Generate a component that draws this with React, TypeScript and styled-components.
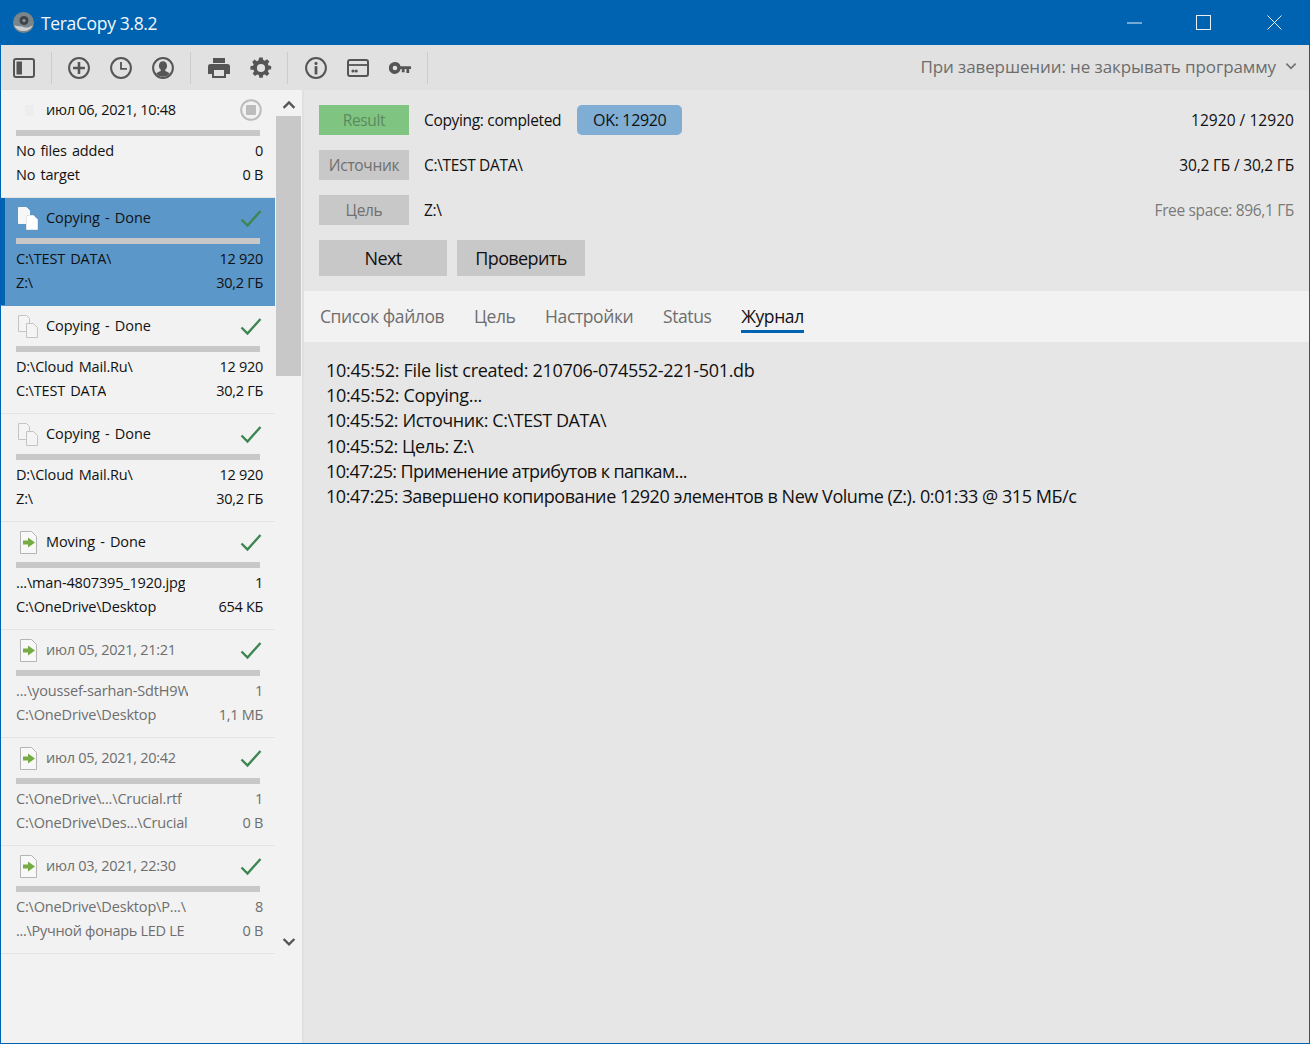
import React from 'react'
import styled, { createGlobalStyle } from 'styled-components'

const GlobalStyle = createGlobalStyle`
  html, body { margin: 0; padding: 0; background: #e6e6e6; }
  body { font-family: "Open Sans", "Noto Sans", "Liberation Sans", sans-serif; color: #111; }
  * { box-sizing: border-box; }
`

const Window = styled.div`
  width: 1310px;
  height: 1044px;
  display: flex;
  flex-direction: column;
  border: 1px solid #0063b1;
  border-top: 0;
  overflow: hidden;
`
const TitleBar = styled.header`
  height: 45px;
  flex: none;
  margin: 0 -1px;
  background: #0063b1;
  color: #f2f7fb;
  display: flex;
  align-items: center;
  padding-left: 13px;
`
const AppName = styled.span`
  font-size: 17.5px;
  letter-spacing: -0.35px;
  margin-left: 7px;
`
const WinButtons = styled.div`
  margin-left: auto;
  display: flex;
`
const WinButton = styled.div`
  width: 71px;
  height: 45px;
  display: flex;
  align-items: center;
  justify-content: center;
`
const MinimizeGlyph = styled.svg`
  margin-left: 4px;
`
const Toolbar = styled.div`
  height: 45px;
  flex: none;
  background: #e1e1e1;
  display: flex;
  align-items: center;
  padding-left: 12px;
`
const ToolIcon = styled.div<{ $w?: number }>`
  width: ${(p) => p.$w ?? 42}px;
  height: 45px;
  display: flex;
  align-items: center;
  justify-content: center;
  color: #555;
`
const ToolGroup = styled.div<{ $w: number }>`
  width: ${(p) => p.$w}px;
  height: 32px;
  display: flex;
  align-items: center;
  border-right: 1px solid #cdcdcd;
`
const OnFinish = styled.div`
  margin-left: auto;
  display: flex;
  align-items: center;
  font-size: 17px;
  letter-spacing: -0.1px;
  line-height: 22px;
  color: #6d6d6d;
  padding-right: 12px;
  padding-bottom: 2px;
  gap: 9px;
`
const Body = styled.div`
  flex: 1;
  display: flex;
  min-height: 0;
`
const Sidebar = styled.aside`
  width: 303px;
  flex: none;
  background: #f2f2f2;
  display: flex;
  border-right: 2px solid #e0e0e0;
`
const List = styled.div`
  width: 274px;
  flex: none;
`
const Row = styled.div<{ $selected?: boolean }>`
  height: 108px;
  padding: 0 12px 0 16px;
  margin-left: -1px;
  width: 275px;
  border-bottom: 1px solid ${(p) => (p.$selected ? '#5c97c9' : '#e4e4e4')};
  background: ${(p) => (p.$selected ? '#5c97c9' : 'transparent')};
  box-shadow: ${(p) => (p.$selected ? 'inset 5px 0 0 #0063b1' : 'none')};
`
const RowHead = styled.div`
  height: 40px;
  display: flex;
  align-items: center;
`
const RowIcon = styled.div<{ $inset?: number }>`
  width: 30px;
  height: 26px;
  flex: none;
  display: flex;
  align-items: center;
  padding-left: ${(p) => p.$inset ?? 2}px;
`
const RowTitle = styled.span<{ $dim?: boolean; $date?: boolean }>`
  font-size: 14.5px;
  margin-top: -2px;
  letter-spacing: ${(p) => (p.$date ? '-0.28px' : '-0.08px')};
  word-spacing: ${(p) => (p.$date ? '0' : '1.5px')};
  color: ${(p) => (p.$dim ? '#6e6e6e' : '#111')};
`
const RowStatus = styled.div`
  margin-left: auto;
  width: 22px;
  display: flex;
  justify-content: center;
  margin-right: 1px;
`
const Progress = styled.div`
  width: 244px;
  height: 6px;
  background: #c8c8c8;
`
const Line = styled.div<{ $dim?: boolean }>`
  height: 24px;
  display: flex;
  align-items: center;
  justify-content: space-between;
  font-size: 14.5px;
  letter-spacing: -0.17px;
  word-spacing: 1.5px;
  color: ${(p) => (p.$dim ? '#6e6e6e' : '#111')};
`
const Lines = styled.div`
  padding-top: 2px;
`
const PathText = styled.span<{ $tight?: boolean }>`
  max-width: 172px;
  overflow: hidden;
  white-space: nowrap;
  letter-spacing: ${(p) => (p.$tight ? '-0.3px' : 'inherit')};
  word-spacing: ${(p) => (p.$tight ? '0' : 'inherit')};
`
const Amount = styled.span`
  letter-spacing: -0.3px;
  word-spacing: 0;
`
const Scrollbar = styled.div`
  width: 26px;
  flex: none;
  display: flex;
  flex-direction: column;
  align-items: stretch;
  padding-right: 1px;
  margin-left: 1px;
`
const ScrollArrow = styled.div`
  height: 26px;
  flex: none;
  display: flex;
  align-items: center;
  justify-content: center;
  padding-top: 3px;
`
const ScrollThumb = styled.div`
  height: 260px;
  background: #c8c8c8;
`
const ScrollGap = styled.div`
  height: 551px;
  flex: none;
`
const Main = styled.main`
  flex: 1;
  min-width: 0;
  display: flex;
  flex-direction: column;
  background: #e6e6e6;
`
const Summary = styled.section`
  padding: 15px;
  display: flex;
  flex-direction: column;
  gap: 15px;
`
const InfoRow = styled.div`
  height: 30px;
  display: flex;
  align-items: center;
  font-size: 15.5px;
  letter-spacing: -0.33px;
`
const Tag = styled.div<{ $green?: boolean }>`
  width: 90px;
  height: 30px;
  margin-right: 15px;
  flex: none;
  display: flex;
  align-items: center;
  justify-content: center;
  background: ${(p) => (p.$green ? '#7fc481' : '#c8c8c8')};
  color: ${(p) => (p.$green ? '#5c8a5f' : '#707070')};
  font-size: 15.5px;
`
const Pill = styled.div`
  width: 105px;
  height: 30px;
  margin-left: 16px;
  border-radius: 5px;
  background: #7fadd4;
  display: flex;
  align-items: center;
  justify-content: center;
  font-size: 16px;
`
const Right = styled.span<{ $dim?: boolean; $spacing: number }>`
  margin-left: auto;
  color: ${(p) => (p.$dim ? '#7a7a7a' : '#111')};
  letter-spacing: ${(p) => p.$spacing}px;
`
const Actions = styled.div`
  display: flex;
  gap: 10px;
`
const ActionButton = styled.div`
  width: 128px;
  height: 36px;
  background: #c8c8c8;
  display: flex;
  align-items: center;
  justify-content: center;
  font-size: 18px;
  letter-spacing: -0.6px;
`
const Tabs = styled.nav`
  height: 51px;
  flex: none;
  background: #f2f2f2;
  display: flex;
  gap: 29.7px;
  padding-left: 16px;
`
const Tab = styled.div<{ $active?: boolean }>`
  height: 38px;
  margin-top: 4px;
  display: flex;
  align-items: center;
  font-size: 17.5px;
  letter-spacing: -0.4px;
  color: ${(p) => (p.$active ? '#111' : '#6e6e6e')};
  border-bottom: 3px solid ${(p) => (p.$active ? '#0063b1' : 'transparent')};
  padding-top: 7px;
`
const Log = styled.div`
  padding: 16px 0 0 22px;
  font-size: 18px;
  line-height: 25.2px;
  color: #111;
`
const LogLine = styled.div<{ $spacing: number }>`
  letter-spacing: ${(p) => p.$spacing}px;
`
const GhostIcon = styled.div`
  width: 9px;
  height: 11px;
  margin-left: 7px;
  background: #ededed;
`

const PageIcon = ({ strong }: { strong?: boolean }) => (
  <svg width="20" height="23" viewBox="0 0 20 23" fill="none">
    <path d="M.5.5h8l3 3v13h-11z" fill={strong ? '#f7f7f7' : '#f4f4f4'} stroke={strong ? '#f7f7f7' : '#c4c4c4'} />
    <path d="M8.500 8.500h7l4 4v10h-11z" fill={strong ? '#fff' : '#f4f4f4'} stroke={strong ? '#e6e6e6' : '#c4c4c4'} />
  </svg>
)
const MoveIcon = () => (
  <svg width="17" height="23" viewBox="0 0 17 23" fill="none">
    <path d="M.5.500h11l5 5v17h-16z" fill="#f8f8f8" stroke="#b5b5b5" />
    <path d="M3 9.500h5V6.500l7 5-7 5v-3H3z" fill="#74ab45" />
  </svg>
)
const Check = () => (
  <svg width="22" height="19" viewBox="0 0 22 19" fill="none">
    <path d="M1.500 10.500l6 6L20.500 2" stroke="#3f8552" strokeWidth="2.4" />
  </svg>
)
const StopIcon = () => (
  <svg width="22" height="22" viewBox="0 0 22 22">
    <circle cx="11" cy="11" r="9.800" fill="none" stroke="#bcbcbc" strokeWidth="2" />
    <rect x="6" y="6" width="10" height="10" rx="1" fill="#bcbcbc" />
  </svg>
)
const Chevron = ({ up, size = 14, thin }: { up?: boolean; size?: number; thin?: boolean }) => (
  <svg width={size} height={size * 0.7} viewBox="0 0 14 10" fill="none">
    <path
      d={up ? 'M1.500 8L7 2.500 12.500 8' : 'M1.500 2L7 7.500 12.500 2'}
      stroke={thin ? '#707070' : '#555'}
      strokeWidth={thin ? 2 : 2.4}
    />
  </svg>
)
const Logo = () => (
  <svg width="21" height="21" viewBox="0 0 21 21">
    <circle cx="10.500" cy="10.500" r="10.500" fill="#7b8589" />
    <path d="M1 13c3 2 6 .5 9.500 2s6.500 0 9.500-2a10.500 10.500 0 0 1-19 0z" fill="#c9cfd2" />
    <circle cx="11" cy="8.500" r="4.500" fill="#3e4447" />
    <circle cx="11" cy="8.500" r="1.600" fill="#8f979b" />
  </svg>
)

const SidebarToggleIcon = () => (
  <svg width="22" height="20" viewBox="0 0 22 20" fill="none">
    <rect x="1" y="1" width="20" height="18" rx="2" stroke="currentColor" strokeWidth="2" />
    <rect x="3.500" y="3.500" width="5.500" height="13" fill="currentColor" />
  </svg>
)
const PlusCircleIcon = () => (
  <svg width="22" height="22" viewBox="0 0 24 24" fill="none">
    <circle cx="12" cy="12" r="10.800" stroke="currentColor" strokeWidth="2.200" />
    <path d="M12 5.500v13M5.500 12h13" stroke="currentColor" strokeWidth="2.800" />
  </svg>
)
const ClockIcon = () => (
  <svg width="22" height="22" viewBox="0 0 24 24" fill="none">
    <circle cx="12" cy="12" r="10.800" stroke="currentColor" strokeWidth="2.200" />
    <path d="M12 5.500V13h6.500" stroke="currentColor" strokeWidth="2" />
  </svg>
)
const UserIcon = () => (
  <svg width="22" height="22" viewBox="0 0 24 24" fill="none">
    <circle cx="12" cy="12" r="10.800" stroke="currentColor" strokeWidth="2.200" />
    <path d="M12 4.500c-2.800 0-4.400 2.200-4.400 5 0 2 .9 3.600 2 4.400v1.400c-2 .7-4 1.600-5 3A10 10 0 0 0 19.400 18.300c-1-1.400-3-2.300-5-3v-1.400c1.100-.8 2-2.400 2-4.400 0-2.800-1.600-5-4.400-5z" fill="currentColor" />
  </svg>
)
const PrinterIcon = () => (
  <svg width="22" height="20" viewBox="0 0 22 20">
    <path fill="currentColor" d="M5 0h12v5H5zM2.500 6h17A2.500 2.500 0 0 1 22 8.500V16h-4v4H4v-4H0V8.500A2.500 2.500 0 0 1 2.500 6z" />
    <rect x="6" y="12" width="10" height="6" fill="#e1e1e1" />
  </svg>
)
const GearIcon = () => (
  <svg width="22" height="22" viewBox="-1 -1 26 26">
    <path fill="currentColor" d="M10 -.5h4l.6 3.100 1.900.8 2.600-1.800 2.800 2.800-1.800 2.600.8 1.900 3.100.6v4l-3.100.6-.8 1.900 1.800 2.600-2.800 2.800-2.600-1.800-1.900.8-.6 3.100h-4l-.6-3.100-1.900-.8-2.600 1.800-2.800-2.800 1.800-2.600-.8-1.900L-.5 14v-4l3.100-.6.8-1.900-1.800-2.600 2.800-2.800 2.600 1.800 1.900-.8z" />
    <circle cx="12" cy="12" r="4.800" fill="#e1e1e1" />
  </svg>
)
const InfoIcon = () => (
  <svg width="22" height="22" viewBox="0 0 24 24" fill="none">
    <circle cx="12" cy="12" r="10.800" stroke="currentColor" strokeWidth="2.200" />
    <circle cx="12" cy="7" r="1.700" fill="currentColor" />
    <rect x="10.500" y="10" width="3" height="9" fill="currentColor" />
  </svg>
)
const CardIcon = () => (
  <svg width="22" height="18" viewBox="0 0 22 18" fill="none">
    <rect x="1" y="1" width="20" height="16" rx="2" stroke="currentColor" strokeWidth="2" />
    <path d="M1.500 6h19" stroke="currentColor" strokeWidth="1.800" />
    <circle cx="6" cy="12" r="1.600" fill="currentColor" />
    <circle cx="9.200" cy="12" r="1.600" fill="currentColor" />
  </svg>
)
const KeyIcon = () => (
  <svg width="22" height="12" viewBox="0 0 24 13">
    <path fill="currentColor" fillRule="evenodd" d="M6.500 0a6.500 6.500 0 0 1 6.100 4.500H24v3.200h-2V12h-3V7.700h-2V11h-3V7.700h-1.300A6.500 6.500 0 1 1 6.500 0zm0 4a2.500 2.500 0 1 0 0 5 2.500 2.500 0 0 0 0-5z" />
  </svg>
)

type Job = {
  kind: 'copyStrong' | 'copy' | 'move'
  title: string
  dim?: boolean
  tightTarget?: boolean
  a: string
  b: string
  n: string
  size: string
}

const jobs: Job[] = [
  { kind: 'copyStrong', title: 'Copying - Done', a: 'C:\\TEST DATA\\', b: 'Z:\\', n: '12 920', size: '30,2 ГБ' },
  { kind: 'copy', title: 'Copying - Done', a: 'D:\\Cloud Mail.Ru\\', b: 'C:\\TEST DATA', n: '12 920', size: '30,2 ГБ' },
  { kind: 'copy', title: 'Copying - Done', a: 'D:\\Cloud Mail.Ru\\', b: 'Z:\\', n: '12 920', size: '30,2 ГБ' },
  { kind: 'move', title: 'Moving - Done', a: '...\\man-4807395_1920.jpg', b: 'C:\\OneDrive\\Desktop', n: '1', size: '654 КБ' },
  { kind: 'move', title: 'июл 05, 2021, 21:21', dim: true, a: '...\\youssef-sarhan-SdtH9W', b: 'C:\\OneDrive\\Desktop', n: '1', size: '1,1 МБ' },
  { kind: 'move', title: 'июл 05, 2021, 20:42', dim: true, a: 'C:\\OneDrive\\...\\Crucial.rtf', b: 'C:\\OneDrive\\Des...\\Crucial', n: '1', size: '0 В' },
  { kind: 'move', title: 'июл 03, 2021, 22:30', dim: true, tightTarget: true, a: 'C:\\OneDrive\\Desktop\\P...\\', b: '...\\Ручной фонарь LED LE', n: '8', size: '0 В' },
]

const logLines = [
  { text: '10:45:52: File list created: 210706-074552-221-501.db', spacing: -0.31 },
  { text: '10:45:52: Copying...', spacing: -0.32 },
  { text: '10:45:52: Источник: C:\\TEST DATA\\', spacing: -0.42 },
  { text: '10:45:52: Цель: Z:\\', spacing: -0.45 },
  { text: '10:47:25: Применение атрибутов к папкам...', spacing: -0.61 },
  { text: '10:47:25: Завершено копирование 12920 элементов в New Volume (Z:). 0:01:33 @ 315 МБ/с', spacing: -0.44 },
]

const tabs = ['Список файлов', 'Цель', 'Настройки', 'Status', 'Журнал']

const JobRow: React.FC<{ job: Job; selected?: boolean }> = ({ job, selected }) => (
  <Row $selected={selected}>
    <RowHead>
      <RowIcon $inset={job.kind === 'move' ? 4 : 2}>
        {job.kind === 'move' ? <MoveIcon /> : <PageIcon strong={job.kind === 'copyStrong'} />}
      </RowIcon>
      <RowTitle $dim={job.dim} $date={job.dim}>{job.title}</RowTitle>
      <RowStatus>
        <Check />
      </RowStatus>
    </RowHead>
    <Progress />
    <Lines>
      <Line $dim={job.dim}>
        <PathText>{job.a}</PathText>
        <Amount>{job.n}</Amount>
      </Line>
      <Line $dim={job.dim}>
        <PathText $tight={job.tightTarget}>{job.b}</PathText>
        <Amount>{job.size}</Amount>
      </Line>
    </Lines>
  </Row>
)

const App: React.FC = () => {
  return (
    <Window>
      <GlobalStyle />
      <TitleBar>
        <Logo />
        <AppName>TeraCopy 3.8.2</AppName>
        <WinButtons>
          <WinButton>
            <MinimizeGlyph width="15" height="2"><path d="M0 1h15" stroke="#e8f0f7" /></MinimizeGlyph>
          </WinButton>
          <WinButton>
            <svg width="15" height="15" fill="none"><rect x=".5" y=".5" width="14" height="14" stroke="#e8f0f7" /></svg>
          </WinButton>
          <WinButton>
            <svg width="15" height="15" fill="none"><path d="M.5.500l14 14M14.500.5l-14 14" stroke="#e8f0f7" /></svg>
          </WinButton>
        </WinButtons>
      </TitleBar>
      <Toolbar>
        <ToolGroup $w={39}>
          <ToolIcon $w={22}><SidebarToggleIcon /></ToolIcon>
        </ToolGroup>
        <ToolGroup $w={139}>
          <ToolIcon $w={6} />
          <ToolIcon><PlusCircleIcon /></ToolIcon>
          <ToolIcon><ClockIcon /></ToolIcon>
          <ToolIcon><UserIcon /></ToolIcon>
        </ToolGroup>
        <ToolGroup $w={97}>
          <ToolIcon $w={7} />
          <ToolIcon><PrinterIcon /></ToolIcon>
          <ToolIcon><GearIcon /></ToolIcon>
        </ToolGroup>
        <ToolGroup $w={140}>
          <ToolIcon $w={7} />
          <ToolIcon><InfoIcon /></ToolIcon>
          <ToolIcon><CardIcon /></ToolIcon>
          <ToolIcon><KeyIcon /></ToolIcon>
        </ToolGroup>
        <OnFinish>
          При завершении: не закрывать программу
          <Chevron size={12} thin />
        </OnFinish>
      </Toolbar>
      <Body>
        <Sidebar>
          <List>
            <Row>
              <RowHead>
                <RowIcon><GhostIcon /></RowIcon>
                <RowTitle $date>июл 06, 2021, 10:48</RowTitle>
                <RowStatus><StopIcon /></RowStatus>
              </RowHead>
              <Progress />
              <Lines>
                <Line><PathText>No files added</PathText><Amount>0</Amount></Line>
                <Line><PathText>No target</PathText><Amount>0 B</Amount></Line>
              </Lines>
            </Row>
            {jobs.map((job, i) => (
              <JobRow key={i} job={job} selected={i === 0} />
            ))}
          </List>
          <Scrollbar>
            <ScrollArrow><Chevron up /></ScrollArrow>
            <ScrollThumb />
            <ScrollGap />
            <ScrollArrow><Chevron /></ScrollArrow>
          </Scrollbar>
        </Sidebar>
        <Main>
          <Summary>
            <InfoRow>
              <Tag $green>Result</Tag>
              Copying: completed
              <Pill>OK: 12920</Pill>
              <Right $spacing={0.05}>12920 / 12920</Right>
            </InfoRow>
            <InfoRow>
              <Tag>Источник</Tag>
              C:\TEST DATA\
              <Right $spacing={-0.2}>30,2 ГБ / 30,2 ГБ</Right>
            </InfoRow>
            <InfoRow>
              <Tag>Цель</Tag>
              Z:\
              <Right $dim $spacing={-0.35}>Free space: 896,1 ГБ</Right>
            </InfoRow>
            <Actions>
              <ActionButton>Next</ActionButton>
              <ActionButton>Проверить</ActionButton>
            </Actions>
          </Summary>
          <Tabs>
            {tabs.map((t) => (
              <Tab key={t} $active={t === 'Журнал'}>{t}</Tab>
            ))}
          </Tabs>
          <Log>
            {logLines.map((l) => (
              <LogLine key={l.text} $spacing={l.spacing}>{l.text}</LogLine>
            ))}
          </Log>
        </Main>
      </Body>
    </Window>
  )
}

export default App
